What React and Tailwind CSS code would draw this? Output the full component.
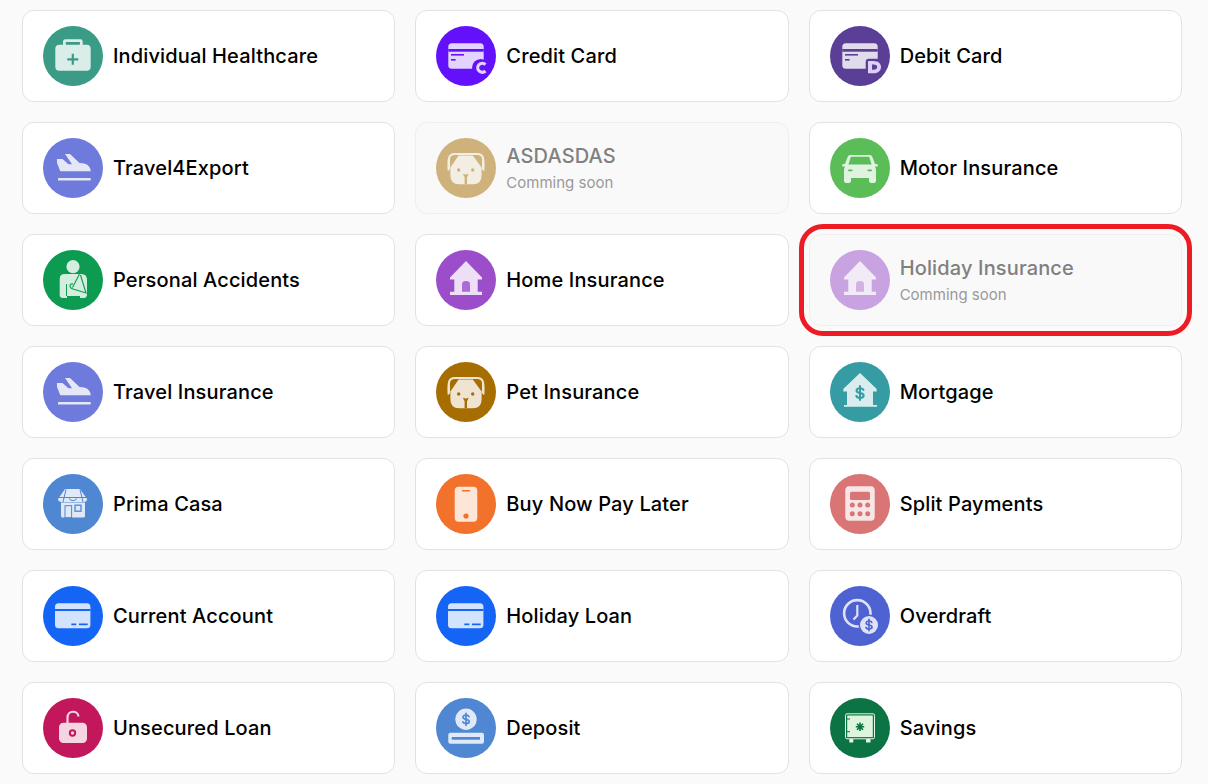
const FONT = 'font-["Inter",sans-serif]';

/* Shared light layer: all the pale parts of an icon, flattened at one opacity */
const Pale = ({ children }) => (
  <g fill="#fff" opacity="0.82">
    {children}
  </g>
);

const Dollar = ({ x, y, s = 1, color, w = 1.7 }) => (
  <g transform={`translate(${x} ${y}) scale(${s})`} fill="none" stroke={color} strokeWidth={w} strokeLinecap="round">
    <path d="M3 -2.6C2.6 -3.8 1.4 -4.2 0 -4.2C-1.9 -4.2 -3 -3.3 -3 -2C-3 0.9 3.2 -0.8 3.2 2.2C3.2 3.5 1.9 4.2 0 4.2C-1.5 4.2 -2.8 3.7 -3.2 2.5" />
    <path d="M0 -6V6" />
  </g>
);

const Briefcase = ({ c }) => (
  <>
    <Pale>
      <path d="M20 19V15.5Q20 13.3 22.2 13.3H37.5Q39.7 13.3 39.7 15.5V19H36.9V16H22.8V19Z" />
      <rect x="12.3" y="18.7" width="35.4" height="26" rx="4" />
    </Pale>
    <path d="M29.8 27.8V38.8M24.3 33.3H35.3" stroke={c} strokeWidth="2.2" />
  </>
);

const Plane = () => (
  <Pale>
    <path d="M14 21H19.5L25.5 26.3H29L22 16H27L36.5 25Q44 25.4 46 28.5Q47.7 30.5 47.7 33.3H17.3L14 25Z" />
    <rect x="15" y="40" width="32.7" height="2.6" rx="0.6" />
  </Pale>
);

const CardBase = ({ c }) => (
  <>
    <Pale>
      <rect x="12.3" y="17.3" width="35.4" height="25.4" rx="3.5" />
    </Pale>
    <rect x="12.3" y="23" width="35.4" height="2.7" fill={c} />
    <rect x="15" y="28" width="13" height="1.6" fill={c} />
    <rect x="15" y="33" width="4.6" height="1.6" fill={c} />
  </>
);

const CreditCard = ({ c }) => (
  <>
    <CardBase c={c} />
    <circle cx="44.8" cy="41.8" r="8.8" fill={c} />
    <path d="M49.4 38.6A4.5 4.5 0 1 0 49.4 45" fill="none" stroke="#fff" strokeOpacity="0.82" strokeWidth="3.2" />
  </>
);

const DebitCard = ({ c }) => (
  <>
    <CardBase c={c} />
    <rect x="35.7" y="32.7" width="17" height="16" rx="3" fill={c} />
    <path d="M38 35H43.5C48.5 35 51 37.8 51 41S48.5 47.3 43.5 47.3H38Z" fill="#dcd0f8" />
    <path d="M42 38.5H43.5C46 38.5 47.2 39.6 47.2 41.1S46 43.8 43.5 43.8H42Z" fill={c} />
  </>
);

const Dog = ({ c }) => (
  <>
    <Pale>
      <path d="M11.7 33Q11 25 12 20Q13 15 19 15H41Q47 15 48 20Q49 25 48.3 33Q47 33 46 31V21Q45.6 17 41 17H19Q14.4 17 14 21V31Q13 33 11.7 33Z" />
      <path d="M14.4 29.5L22.6 17.4H36.8L45.6 29.5V37.5Q45.6 46.3 36.8 46.3H23.2Q14.4 46.3 14.4 37.5Z" />
    </Pale>
    <circle cx="22.7" cy="32" r="1.7" fill={c} />
    <circle cx="36.7" cy="32" r="1.7" fill={c} />
    <path d="M26.8 35.8Q29.8 37.2 32.8 35.8L31 39.2V46.3H28.6V39.2Z" fill={c} />
  </>
);

const Car = ({ c }) => (
  <>
    <Pale>
      <path d="M20 17H40Q41.5 17 42.2 18.6L45 26H47Q47.8 26 47.8 28.4H44.8Q46 30 46 32V43Q46 45 43.7 45H41.5Q39 45 39 42.5V40H21V42.5Q21 45 18.5 45H16.3Q14 45 14 43V32Q14 30 15.2 28.4H12.2Q12.2 26 13 26H15L17.8 18.6Q18.5 17 20 17Z" />
    </Pale>
    <path d="M20.8 18.8H39.2L41.6 26.4H18.4Z" fill={c} />
    <rect x="18" y="31.5" width="4.6" height="1.7" rx="0.8" fill={c} />
    <rect x="37.4" y="31.5" width="4.6" height="1.7" rx="0.8" fill={c} />
  </>
);

const House = ({ c }) => (
  <>
    <Pale>
      <path d="M30 11L46 27.5V29.4H41.7V41.7H46V45H14V41.7H18.3V29.4H14V27.5Z" />
    </Pale>
    <path d="M26 41.7V34.3Q26 31 30 31T34 34.3V41.7Z" fill={c} opacity="0.8" />
  </>
);

const MortgageHouse = ({ c }) => (
  <>
    <Pale>
      <path d="M30 11L46.7 27V29.4H43V43H47V44.7H14V43H17V29.4H13.3V27Z" />
    </Pale>
    <Dollar x={30} y={31} s={1.15} color={c} w={1.8} />
  </>
);

const Person = ({ c }) => (
  <>
    <Pale>
      <circle cx="30" cy="16.7" r="6.6" />
      <path d="M21.5 24H38.5Q44 24 44 30V44Q44 48 41 48H37V46H24V48H20Q16.7 48 16.7 45V29Q16.7 24 21.5 24Z" />
    </Pale>
    <path d="M36.5 24L29.5 37.5M37.5 25L43 43L30 39Q27 38 27 36Q27 33.5 30 34" fill="none" stroke={c} strokeWidth="1.1" />
    <path d="M23.5 34V46" stroke={c} strokeWidth="1" />
  </>
);

const Shop = ({ c }) => (
  <>
    <Pale>
      <path d="M22 15H37L44 25Q44 28 41 28H19Q15 28 15 25Z" />
      <path d="M18 28.4H42V42Q42 43.5 40.5 43.5H19.5Q18 43.5 18 42Z" />
    </Pale>
    <path d="M15.5 23.5H44M23 15.5L20 28M37 15.5L40 28M26 24.5Q30 29 34 24.5" fill="none" stroke={c} strokeWidth="1" />
    <rect x="22" y="31.7" width="6.6" height="12" fill="none" stroke={c} strokeWidth="1" />
    <rect x="32" y="31.2" width="6" height="6" fill="none" stroke={c} strokeWidth="1.3" />
  </>
);

const Phone = ({ c }) => (
  <>
    <Pale>
      <rect x="18.7" y="12.7" width="22.6" height="35" rx="4" />
    </Pale>
    <rect x="25.7" y="16" width="8.4" height="1.6" rx="0.8" fill={c} />
    <circle cx="30" cy="42" r="2.6" fill={c} />
  </>
);

const Calculator = ({ c }) => (
  <>
    <Pale>
      <rect x="15.3" y="12.3" width="29.4" height="34.4" rx="4" />
    </Pale>
    <rect x="20" y="17.7" width="20" height="8.3" rx="1.5" fill={c} />
    {[22.3, 30, 37.7].map((x) =>
      [31, 39.7].map((y) => <circle key={`${x}-${y}`} cx={x} cy={y} r="2.5" fill={c} />),
    )}
  </>
);

const BankCard = ({ c }) => (
  <>
    <Pale>
      <rect x="12" y="17.3" width="35.4" height="25" rx="3.5" />
    </Pale>
    <rect x="12" y="23" width="35.4" height="2" fill={c} />
    <rect x="28.3" y="37.5" width="5" height="1.7" fill={c} />
    <rect x="36" y="37.5" width="8.7" height="1.7" fill={c} />
  </>
);

const Clock = ({ c }) => (
  <>
    <g opacity="0.82">
      <circle cx="27.3" cy="27.3" r="13.2" fill="none" stroke="#fff" strokeWidth="2.6" />
      <path d="M27.3 19V29.5L23.5 33.5" fill="none" stroke="#fff" strokeWidth="2.2" />
    </g>
    <circle cx="39" cy="39" r="10.5" fill={c} />
    <Pale>
      <circle cx="39" cy="39" r="9" />
    </Pale>
    <Dollar x={39} y={39} s={0.95} color={c} w={1.7} />
  </>
);

const Padlock = ({ c }) => (
  <>
    <g opacity="0.82">
      <path d="M24.5 25V19.5C24.5 12 35 12 35.5 18.5" fill="none" stroke="#fff" strokeWidth="2.2" />
      <rect x="16" y="24.7" width="28" height="20.3" rx="4.5" fill="#fff" />
    </g>
    <circle cx="29.5" cy="35" r="2.7" fill="none" stroke={c} strokeWidth="2" />
  </>
);

const Coin = ({ c }) => (
  <>
    <Pale>
      <circle cx="30" cy="21.3" r="10.7" />
      <rect x="12.3" y="34.7" width="35.7" height="11" rx="2" />
    </Pale>
    <Dollar x={30} y={21.3} s={1} color={c} w={1.7} />
    <rect x="15.7" y="39" width="28.3" height="2.7" fill={c} />
  </>
);

const Safe = ({ c }) => (
  <>
    <rect x="15.5" y="15.8" width="29" height="25" rx="1.5" fill="none" stroke="#e6f7e6" strokeWidth="1" />
    <rect x="17.2" y="17.5" width="25.6" height="21.6" fill="#dcf5dc" />
    <rect x="19.3" y="41" width="4" height="3.5" rx="0.6" fill="#e6f7e6" />
    <rect x="36" y="41" width="4.5" height="3.5" rx="0.6" fill="#e6f7e6" />
    <path d="M16.5 21H20M16.5 33.7H20" stroke={c} strokeWidth="1" />
    <path d="M34.2 28.7H25.8M30 24.5V32.9M27 25.7L33 31.7M33 25.7L27 31.7" stroke={c} strokeWidth="1.6" />
  </>
);

const ROWS = [
  { label: 'Individual Healthcare', color: '#3a9b87', Icon: Briefcase },
  { label: 'Credit Card', color: '#6411fb', Icon: CreditCard },
  { label: 'Debit Card', color: '#5b3f96', Icon: DebitCard },
  { label: 'Travel4Export', color: '#6f7bdc', Icon: Plane },
  { label: 'ASDASDAS', color: '#a66d00', Icon: Dog, soon: true },
  { label: 'Motor Insurance', color: '#5bbd57', Icon: Car },
  { label: 'Personal Accidents', color: '#0c9b50', Icon: Person },
  { label: 'Home Insurance', color: '#9b4dca', Icon: House },
  { label: 'Holiday Insurance', color: '#9b4dca', Icon: House, soon: true, marked: true },
  { label: 'Travel Insurance', color: '#6f7bdc', Icon: Plane },
  { label: 'Pet Insurance', color: '#a66d00', Icon: Dog },
  { label: 'Mortgage', color: '#369ca3', Icon: MortgageHouse },
  { label: 'Prima Casa', color: '#4f87d3', Icon: Shop },
  { label: 'Buy Now Pay Later', color: '#f2722b', Icon: Phone },
  { label: 'Split Payments', color: '#d97575', Icon: Calculator },
  { label: 'Current Account', color: '#1465f5', Icon: BankCard },
  { label: 'Holiday Loan', color: '#1465f5', Icon: BankCard },
  { label: 'Overdraft', color: '#4f62d1', Icon: Clock },
  { label: 'Unsecured Loan', color: '#c2185b', Icon: Padlock },
  { label: 'Deposit', color: '#4f87d3', Icon: Coin },
  { label: 'Savings', color: '#0c7345', Icon: Safe },
];

function ProductCard({ label, color, Icon, soon, marked }) {
  return (
    <div
      className={`relative flex h-[92px] items-center gap-[10px] rounded-xl border px-5 ${
        soon ? 'border-[#efefef] bg-[#f9f9f9]' : 'border-[#e2e2e2] bg-white'
      }`}
    >
      <svg
        viewBox="0 0 60 60"
        className={`h-[60px] w-[60px] shrink-0 ${soon ? 'opacity-50' : ''}`}
      >
        <circle cx="30" cy="30" r="30" fill={color} />
        <Icon c={color} />
      </svg>
      <div className={`min-w-0 ${soon ? 'pb-[2px]' : ''}`}>
        <div
          className={`text-[20px] leading-[28px] font-medium tracking-[0.14px] ${
            soon ? 'text-[#808080]' : 'text-black'
          }`}
        >
          {label}
        </div>
        {soon && <div className="mt-[3px] text-[15px] leading-[20px] text-[#999999]">Comming soon</div>}
      </div>

      {/* Red annotation around the card */}
      {marked && (
        <div className="pointer-events-none absolute -inset-[11px] rounded-[24px] border-[5px] border-[#ed1c24]" />
      )}
    </div>
  );
}

export default function App() {
  return (
    <div className={`${FONT} h-[784px] overflow-hidden bg-[#fafafa] pt-[10px] pr-[26px] pl-[22px]`}>
      <div className="grid grid-cols-3 gap-5">
        {ROWS.map((row) => (
          <ProductCard key={row.label} {...row} />
        ))}
      </div>
    </div>
  );
}
